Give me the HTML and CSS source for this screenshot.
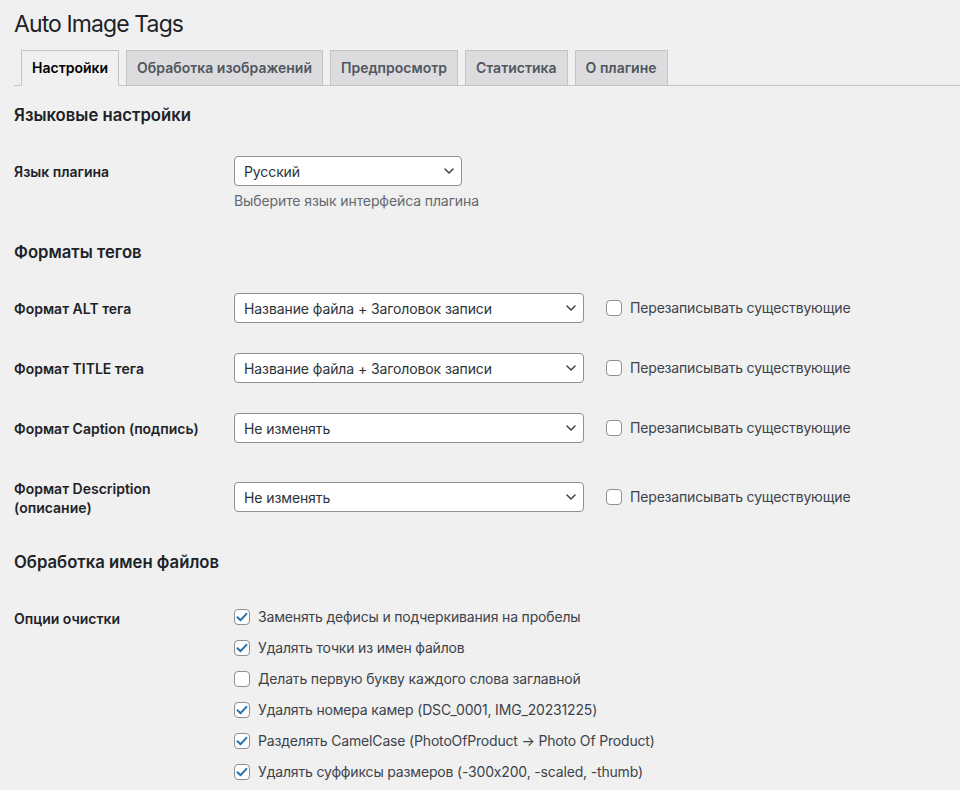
FILE: index.html
```html
<!DOCTYPE html>
<html lang="ru">
<head>
<meta charset="utf-8">
<title>Auto Image Tags</title>
<link rel="stylesheet" href="styles.css">
</head>
<body>
<div class="wrap">
  <h1 class="page-title">Auto Image Tags</h1>
  <nav class="tabs">
    <a class="tab active" href="#">Настройки</a>
    <a class="tab" href="#">Обработка изображений</a>
    <a class="tab" href="#">Предпросмотр</a>
    <a class="tab" href="#">Статистика</a>
    <a class="tab" href="#">О плагине</a>
  </nav>

  <h2 class="section-title first">Языковые настройки</h2>
  <div class="form-table">
    <div class="row">
      <div class="row-label">Язык плагина</div>
      <div class="row-field">
        <div class="select-wrap select-sm">
          <select class="select"><option>Русский</option></select>
          <svg class="chevron" viewBox="0 0 10 6"><polyline points="1,1 5,5 9,1"/></svg>
        </div>
        <p class="description">Выберите язык интерфейса плагина</p>
      </div>
    </div>
  </div>

  <h2 class="section-title">Форматы тегов</h2>
  <div class="form-table">
    <div class="row">
      <div class="row-label">Формат ALT тега</div>
      <div class="row-field field-inline">
        <div class="select-wrap select-lg">
          <select class="select"><option>Название файла + Заголовок записи</option></select>
          <svg class="chevron" viewBox="0 0 10 6"><polyline points="1,1 5,5 9,1"/></svg>
        </div>
        <label class="check"><span class="cb"></span>Перезаписывать существующие</label>
      </div>
    </div>
    <div class="row">
      <div class="row-label">Формат TITLE тега</div>
      <div class="row-field field-inline">
        <div class="select-wrap select-lg">
          <select class="select"><option>Название файла + Заголовок записи</option></select>
          <svg class="chevron" viewBox="0 0 10 6"><polyline points="1,1 5,5 9,1"/></svg>
        </div>
        <label class="check"><span class="cb"></span>Перезаписывать существующие</label>
      </div>
    </div>
    <div class="row">
      <div class="row-label">Формат Caption (подпись)</div>
      <div class="row-field field-inline">
        <div class="select-wrap select-lg">
          <select class="select"><option>Не изменять</option></select>
          <svg class="chevron" viewBox="0 0 10 6"><polyline points="1,1 5,5 9,1"/></svg>
        </div>
        <label class="check"><span class="cb"></span>Перезаписывать существующие</label>
      </div>
    </div>
    <div class="row">
      <div class="row-label">Формат Description<br>(описание)</div>
      <div class="row-field field-inline">
        <div class="select-wrap select-lg">
          <select class="select"><option>Не изменять</option></select>
          <svg class="chevron" viewBox="0 0 10 6"><polyline points="1,1 5,5 9,1"/></svg>
        </div>
        <label class="check"><span class="cb"></span>Перезаписывать существующие</label>
      </div>
    </div>
  </div>

  <h2 class="section-title">Обработка имен файлов</h2>
  <div class="form-table">
    <div class="row">
      <div class="row-label">Опции очистки</div>
      <div class="row-field check-list">
        <label class="check"><span class="cb"><svg class="tick" viewBox="0 0 16 16"><polyline points="3.5,8.2 6.6,11.2 12.4,4.8"/></svg></span>Заменять дефисы и подчеркивания на пробелы</label>
        <label class="check"><span class="cb"><svg class="tick" viewBox="0 0 16 16"><polyline points="3.5,8.2 6.6,11.2 12.4,4.8"/></svg></span>Удалять точки из имен файлов</label>
        <label class="check"><span class="cb"></span>Делать первую букву каждого слова заглавной</label>
        <label class="check"><span class="cb"><svg class="tick" viewBox="0 0 16 16"><polyline points="3.5,8.2 6.6,11.2 12.4,4.8"/></svg></span>Удалять номера камер (DSC_0001, IMG_20231225)</label>
        <label class="check"><span class="cb"><svg class="tick" viewBox="0 0 16 16"><polyline points="3.5,8.2 6.6,11.2 12.4,4.8"/></svg></span>Разделять CamelCase (PhotoOfProduct → Photo Of Product)</label>
        <label class="check"><span class="cb"><svg class="tick" viewBox="0 0 16 16"><polyline points="3.5,8.2 6.6,11.2 12.4,4.8"/></svg></span>Удалять суффиксы размеров (-300x200, -scaled, -thumb)</label>
      </div>
    </div>
  </div>
</div>
</body>
</html>
```

FILE: styles.css
```css
body {
  margin: 0;
  background: #f0f0f1;
  color: #3c434a;
  font-family: Inter, "Noto Sans", "DejaVu Sans", sans-serif;
  font-size: 13px;
  line-height: 1.4;
}

.wrap {
  padding-left: 14px;
}

.page-title {
  margin: 0;
  padding: 9px 0 2px 0;
  font-size: 23px;
  font-weight: 400;
  line-height: 30px;
  letter-spacing: -0.9px;
  color: #1d2327;
}

.tabs {
  display: flex;
  gap: 7px;
  padding: 9px 0 0 7px;
  border-bottom: 1px solid #c3c4c7;
}

.tab {
  display: block;
  padding: 5px 10px;
  margin-bottom: -1px;
  font-size: 14px;
  line-height: 24px;
  font-weight: 600;
  color: #50575e;
  background: #dcdcde;
  border: 1px solid #c3c4c7;
  text-decoration: none;
}

.tab.active {
  background: #f0f0f1;
  color: #000;
  border-bottom-color: #f0f0f1;
}

.section-title {
  margin: 17px 0;
  font-size: 16.7px;
  font-weight: 600;
  line-height: 18px;
  color: #1d2327;
}

.section-title.first {
  margin-top: 20px;
}

.row {
  display: grid;
  grid-template-columns: 210px 1fr;
}

.row-label {
  align-self: start;
  padding: 21px 10px 19px 0;
  font-size: 14px;
  font-weight: 600;
  line-height: 19px;
  color: #1d2327;
}

.row-field {
  align-self: center;
  padding: 15px 10px;
  font-size: 14px;
  line-height: 18px;
}

.field-inline {
  display: flex;
  align-items: center;
  gap: 22px;
}

.select-wrap {
  position: relative;
  height: 30px;
}

.select-sm {
  width: 228px;
}

.select-lg {
  width: 350px;
  flex: none;
}

.select {
  appearance: none;
  -webkit-appearance: none;
  display: block;
  box-sizing: border-box;
  width: 100%;
  height: 30px;
  margin: 0;
  padding: 0 24px 0 9px;
  border: 1px solid #8c8f94;
  border-radius: 4px;
  background: #fff;
  font-family: inherit;
  font-size: 14px;
  letter-spacing: -0.1px;
  color: #2c3338;
}

.chevron {
  position: absolute;
  right: 8px;
  top: 50%;
  width: 10px;
  height: 6px;
  margin-top: -3px;
  fill: none;
  stroke: #3c434a;
  stroke-width: 1.5;
  stroke-linecap: round;
  stroke-linejoin: round;
  pointer-events: none;
}

.description {
  margin: 5px 0 0;
  font-size: 14px;
  line-height: 20px;
  letter-spacing: -0.1px;
  color: #646970;
}

.check {
  display: flex;
  align-items: center;
  gap: 8px;
  font-size: 14px;
  line-height: 18px;
  letter-spacing: -0.17px;
  color: #3c434a;
}

.cb {
  box-sizing: border-box;
  flex: none;
  display: flex;
  align-items: center;
  justify-content: center;
  width: 16px;
  height: 16px;
  border: 1px solid #8c8f94;
  border-radius: 4px;
  background: #fff;
}

.tick {
  width: 16px;
  height: 16px;
  margin: -1px;
  fill: none;
  stroke: #2271b1;
  stroke-width: 2;
  stroke-linecap: round;
  stroke-linejoin: round;
}

.check-list {
  display: flex;
  flex-direction: column;
  align-self: start;
}

.check-list .check {
  margin: 5px 0 8px;
}
```
